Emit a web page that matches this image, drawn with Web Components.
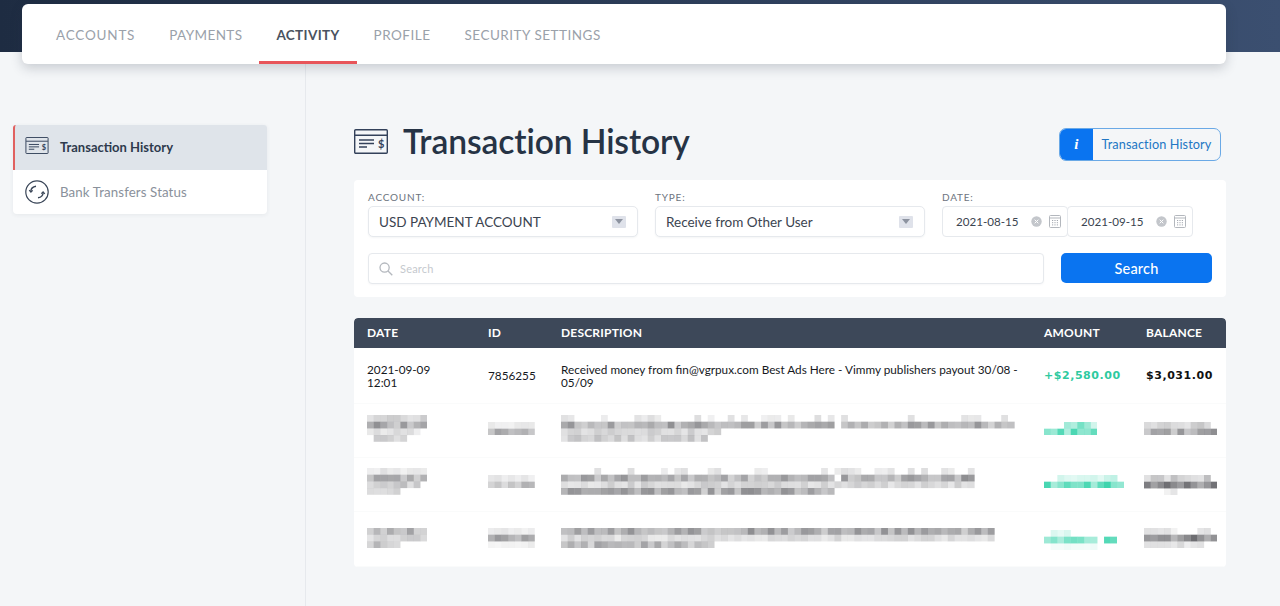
<!DOCTYPE html>
<html lang="en"><head><meta charset="utf-8"><title>Transaction History</title>
<style>
html,body{margin:0;height:606px;overflow:hidden;background:#f4f6f8;font-family:Lato,"Open Sans",sans-serif}
</style></head><body>
<pay-app></pay-app>
<script>
const def=(name,css,html)=>customElements.define(name,class extends HTMLElement{
  connectedCallback(){if(this.shadowRoot)return;this.attachShadow({mode:'open'}).innerHTML=`<style>${css}</style>${typeof html==='function'?html(this):html}`;}
});
const checkIcon=(w,h)=>`<svg width="${w}" height="${h}" viewBox="0 0 34 25" fill="none" stroke="#33415a" stroke-width="1.4"><rect x=".7" y=".7" width="32.6" height="23.6" rx="1"/><path d="M1 6.2h32M5 11h15M5 14.5h15M5 18h8"/><text x="24" y="19" font-family="Lato,sans-serif" font-size="11" font-weight="700" fill="#33415a" stroke="none">$</text></svg>`;
const transferIcon=`<svg width="24" height="24" viewBox="0 0 24 24" fill="none" stroke="#3a4658" stroke-width="1.2"><circle cx="12" cy="12" r="11.2"/><path d="M5.8 11.5C6 8.5 8 6.6 11 6.2" stroke-width="1.4"/><path d="M4.2 10.2l1.7 2 1.8-1.9" stroke-width="1.2"/><path d="M18.2 12.5c-.2 3-2.2 4.9-5.2 5.3" stroke-width="1.4"/><path d="M19.8 13.8l-1.7-2-1.8 1.9" stroke-width="1.2"/></svg>`;

def('tab-item',`:host{display:flex;align-items:center;padding:1px 17px 0;height:60px;box-sizing:border-box;font-size:13.5px;letter-spacing:.5px;color:#9aa1aa;border-bottom:3px solid transparent;border-top:3px solid transparent}
:host([active]){color:#4a5360;font-weight:700;border-bottom-color:#e8555a}`,`<slot></slot>`);
def('tab-bar',`:host{display:flex;height:60px;width:1204px;box-sizing:border-box;padding-left:17px;background:#fff;border-radius:6px;box-shadow:0 4px 12px rgba(40,50,70,.22)}`,`<slot></slot>`);
def('top-band',`:host{display:block;height:52px;box-sizing:border-box;padding:4px 0 0 22px;background:linear-gradient(90deg,#1e2c42,#3b4f70);position:relative;z-index:2}`,`<slot></slot>`);

def('side-link',`:host{display:flex;align-items:center;height:44px;box-sizing:border-box;padding-left:11px;gap:10px;font-size:13.3px;color:#8a919b;letter-spacing:.1px}
:host([active]){height:45px;padding-bottom:1px;background:#dfe4ea;color:#2e3a4d;font-weight:700;font-size:13px;letter-spacing:0;border-left:2px solid #e0605f;padding-left:9px;border-radius:3px 3px 0 0}
.i{width:26px;display:flex;justify-content:center;align-items:center}`,`<span class="i"><slot name="icon"></slot></span><slot></slot>`);
def('side-menu',`:host{display:block;width:254px;background:#fff;border-radius:4px;box-shadow:0 1px 4px rgba(40,50,70,.07)}`,`<slot></slot>`);
def('side-bar',`:host{display:block;width:306px;box-sizing:border-box;padding:73px 0 0 13px;border-right:1px solid #e6e9ed;height:554px}`,`<slot></slot>`);

def('help-button',`:host{display:flex;width:162px;height:33px;box-sizing:border-box;border:1px solid #6aa9e6;border-radius:7px;overflow:hidden;font-size:12.7px;color:#2277c4;background:#f4f6f8;letter-spacing:.1px}
.i{width:33px;background:#0a74f0;color:#fff;display:flex;align-items:center;justify-content:center;font:italic 700 15px "Liberation Serif",serif}
.t{flex:1;display:flex;align-items:center;justify-content:center;padding-bottom:2px}`,`<span class="i">i</span><span class="t"><slot></slot></span>`);
def('page-title',`:host{display:flex;align-items:flex-start;justify-content:space-between;width:867px;height:33px}
.l{display:flex;align-items:flex-start;gap:15px;margin-top:-3px}
.l svg{margin-top:4px}
h1{margin:0;font-size:33.6px;font-weight:600;color:#263345;line-height:33px;letter-spacing:-.1px}`,()=>`<div class="l">${checkIcon(34,25)}<h1><slot></slot></h1></div><slot name="action"></slot>`);

def('field-box',`:host{display:block}
label{display:block;font-size:10px;letter-spacing:.8px;color:#6d747e;line-height:12px;margin-bottom:3px;height:12px}`,el2=>`<label>${el2.getAttribute('label')}</label><slot></slot>`);
def('select-box',`:host{display:flex;align-items:center;justify-content:space-between;box-sizing:border-box;width:270px;height:31px;padding:0 11px 0 10px;border:1px solid #e6e9ed;border-radius:5px;font-size:13.5px;color:#3b4450;background:#fff;box-shadow:0 1px 2px rgba(40,50,70,.05)}
i{width:14px;height:12px;background:#dfe2ea;border-radius:1px;display:flex;align-items:center;justify-content:center}
i::after{content:"";border:4px solid transparent;border-top:5px solid #8d93a0;border-bottom:0}`,`<span><slot></slot></span><i></i>`);
def('date-box',`:host{display:flex;align-items:center;box-sizing:border-box;width:126px;height:31px;padding:0 6px 0 13px;border:1px solid #e6e9ed;border-radius:4px;font-size:11.6px;color:#3b4450;background:#fff;margin-right:-1px}
span{flex:1}
svg{display:block}`,`<span><slot></slot></span>
<svg width="11" height="11" viewBox="0 0 11 11" style="margin-right:7px"><circle cx="5.5" cy="5.5" r="5.2" fill="#c3c6cb"/><path d="M3.7 3.7l3.6 3.6M7.3 3.7l-3.6 3.6" stroke="#fff" stroke-width="1"/></svg>
<svg width="12" height="13" viewBox="0 0 12 13" fill="none" stroke="#b3b7bd"><rect x=".5" y=".5" width="11" height="12" rx="1"/><path d="M.5 3h11"/><path d="M3 5.5h1.2M5.4 5.5h1.2M7.8 5.5h1.2M3 7.7h1.2M5.4 7.7h1.2M7.8 7.7h1.2M3 9.9h1.2M5.4 9.9h1.2M7.8 9.9h1.2" stroke="#a4a8b0"/></svg>`);
def('search-box',`:host{display:flex;align-items:center;gap:7px;box-sizing:border-box;width:676px;height:31px;padding-left:10px;border:1px solid #e6e9ed;border-radius:4px;background:#fff;font-size:11px;letter-spacing:.2px;color:#c5c9ce;box-shadow:0 1px 2px rgba(40,50,70,.04)}`,`<svg width="14" height="14" viewBox="0 0 14 14" fill="none" stroke="#b4b8be" stroke-width="1.3"><circle cx="5.6" cy="5.6" r="4.6"/><path d="M9 9l4.3 4.3"/></svg><slot></slot>`);
def('primary-button',`:host{display:flex;align-items:center;justify-content:center;width:151px;height:30px;background:#0a74f0;color:#fff;border-radius:5px;font-size:14.5px;font-weight:500;letter-spacing:.2px}`,`<slot></slot>`);
def('filter-card',`:host{display:block;box-sizing:border-box;width:872px;height:117px;margin-top:19px;padding:11px 14px 0;background:#fff;border-radius:4px}
.r{display:flex}.r1{gap:17px}.r2{margin-top:16px;gap:17px}`,`<div class="r r1"><slot name="a"></slot><slot name="b"></slot><slot name="c"></slot></div><div class="r r2"><slot name="s"></slot><slot name="go"></slot></div>`);

/* pixelated (censored) text block */
def('mosaic-block',`:host{display:block;line-height:0}svg{display:block;filter:blur(.3px)}`,h=>{
  const rows=h.getAttribute('rows').split('|'),col=h.hasAttribute('green')?'30,205,160':'70,70,75',S=6.67;
  let seed=[...h.getAttribute('rows')].reduce((a,c)=>(a*31+c.charCodeAt(0))%9973,7);
  const rnd=()=>(seed=(seed*137+59)%9973)/9973;
  const width=+h.getAttribute('w')*S;let out='';
  rows.forEach((r,y)=>{r.split(',').forEach(sp=>{const [a,b,l]=sp.split(':').map(Number);
    for(let x=a;x<b;x++){let o;
      if(l<0){if(rnd()<.35)o=.08+rnd()*.1;else continue;}
      else o=Math.max(.05,l*(.6+rnd()*.85));
      out+=`<rect x="${(x*S).toFixed(2)}" y="${(y*S).toFixed(2)}" width="${S+.1}" height="${S+.1}" fill="rgba(${col},${o.toFixed(2)})"/>`;}
  });});
  return `<svg width="${width}" height="${rows.length*S}">${out}</svg>`;});

def('txn-row',`:host{display:grid;grid-template-columns:121px 73px 483px 102px 1fr;padding-left:13px;box-sizing:border-box;background:#fff;color:#15181d;font-size:11.75px;line-height:13px;border-bottom:1px solid #fafbfb}`,`<slot></slot>`);
def('txn-head',`:host{display:grid;grid-template-columns:121px 73px 483px 102px 1fr;padding-left:13px;padding-bottom:2px;box-sizing:border-box;align-items:center;height:30px;background:#3d4859;color:#fff;border-radius:4px 4px 0 0;font-size:12px;font-weight:700;letter-spacing:.2px}`,`<slot></slot>`);
def('money-cell',`:host{display:block;align-self:center;font:700 11px "DejaVu Sans",sans-serif;letter-spacing:.55px;color:#111}
:host([plus]){color:#2fcaa0}`,`<slot></slot>`);
def('txn-table',`:host{display:block;width:872px;margin-top:21px;border-radius:4px;overflow:hidden}`,`<slot></slot>`);
def('txt-cell',`:host{display:block;align-self:center}`,`<slot></slot>`);
def('main-panel',`:host{display:block;flex:1;padding:76px 0 0 48px}`,`<slot></slot>`);
def('page-body',`:host{display:flex}`,`<slot></slot>`);
def('pay-app',`:host{display:block}`,`
<top-band><tab-bar>
<tab-item style="letter-spacing:.8px">ACCOUNTS</tab-item><tab-item style="letter-spacing:.4px">PAYMENTS</tab-item><tab-item active style="letter-spacing:.35px">ACTIVITY</tab-item><tab-item>PROFILE</tab-item><tab-item>SECURITY SETTINGS</tab-item>
</tab-bar></top-band>
<page-body>
<side-bar><side-menu>
<side-link active><span slot="icon">${checkIcon(24,17)}</span>Transaction History</side-link>
<side-link><span slot="icon" style="display:flex">${transferIcon}</span>Bank Transfers Status</side-link>
</side-menu></side-bar>
<main-panel>
<page-title>Transaction History<help-button slot="action">Transaction History</help-button></page-title>
<filter-card>
<field-box slot="a" label="ACCOUNT:"><select-box>USD PAYMENT ACCOUNT</select-box></field-box>
<field-box slot="b" label="TYPE:"><select-box>Receive from Other User</select-box></field-box>
<field-box slot="c" label="DATE:"><div style="display:flex"><date-box>2021-08-15</date-box><date-box>2021-09-15</date-box></div></field-box>
<search-box slot="s">Search</search-box>
<primary-button slot="go">Search</primary-button>
</filter-card>
<txn-table>
<txn-head><span>DATE</span><span>ID</span><span>DESCRIPTION</span><span>AMOUNT</span><span>BALANCE</span></txn-head>
<txn-row style="height:56px"><txt-cell>2021-09-09<br>12:01</txt-cell><txt-cell>7856255</txt-cell><txt-cell>Received money from fin@vgrpux.com Best Ads Here - Vimmy publishers payout 30/08 -<br>05/09</txt-cell><money-cell plus>+$2,580.00</money-cell><money-cell>$3,031.00</money-cell></txn-row>
<txn-row style="height:54px">
<mosaic-block style="margin-top:11px" w="9" rows="0:9:.2|0:9:.42|0:8:.15|1:6:.22"></mosaic-block>
<mosaic-block style="margin-top:18px" w="7" rows="0:7:.1|0:7:.35"></mosaic-block>
<mosaic-block style="margin-top:11px" w="69" rows="0:68:-1|0:41:.42,42:68:.4|0:24:.2|0:22:.24"></mosaic-block>
<mosaic-block green style="margin-top:18px" w="8" rows="3:7:.3,5:8:.3|0:8:.55"></mosaic-block>
<mosaic-block style="margin-top:18px;margin-left:-2px" w="11" rows="0:10:.22|0:11:.45"></mosaic-block></txn-row>
<txn-row style="height:54px">
<mosaic-block style="margin-top:10px" w="9" rows="0:9:.12|0:9:.35|0:8:.25|0:5:.2"></mosaic-block>
<mosaic-block style="margin-top:17px" w="7" rows="0:7:.12|0:7:.3"></mosaic-block>
<mosaic-block style="margin-top:10px" w="69" rows="0:62:-1|0:41:.4,42:62:.42|0:62:.2|0:41:.42"></mosaic-block>
<mosaic-block green style="margin-top:17px" w="12" rows="2:9:.15,9:11:.2|0:9:.6,9:12:.7"></mosaic-block>
<mosaic-block style="margin-top:17px;margin-left:-2px" w="11" rows="0:10:.25|0:11:.55|3:5:.1"></mosaic-block></txn-row>
<txn-row style="height:55px">
<mosaic-block style="margin-top:16px" w="9" rows="0:9:.35|0:9:.2|0:5:.28"></mosaic-block>
<mosaic-block style="margin-top:16px" w="7" rows="0:7:.1|0:7:.45|0:7:.08"></mosaic-block>
<mosaic-block style="margin-top:16px" w="66" rows="0:65:.42|0:65:.18|0:23:.35"></mosaic-block>
<mosaic-block green style="margin-top:18px" w="11" rows="1:4:.12|0:8:.5,9:11:.7|1:8:.05"></mosaic-block>
<mosaic-block style="margin-top:16px;margin-left:-2px" w="11" rows="0:5:.12,8:10:.15|0:11:.55|0:9:.15"></mosaic-block></txn-row>
</txn-table>
</main-panel>
</page-body>`);
</script>
</body></html>
